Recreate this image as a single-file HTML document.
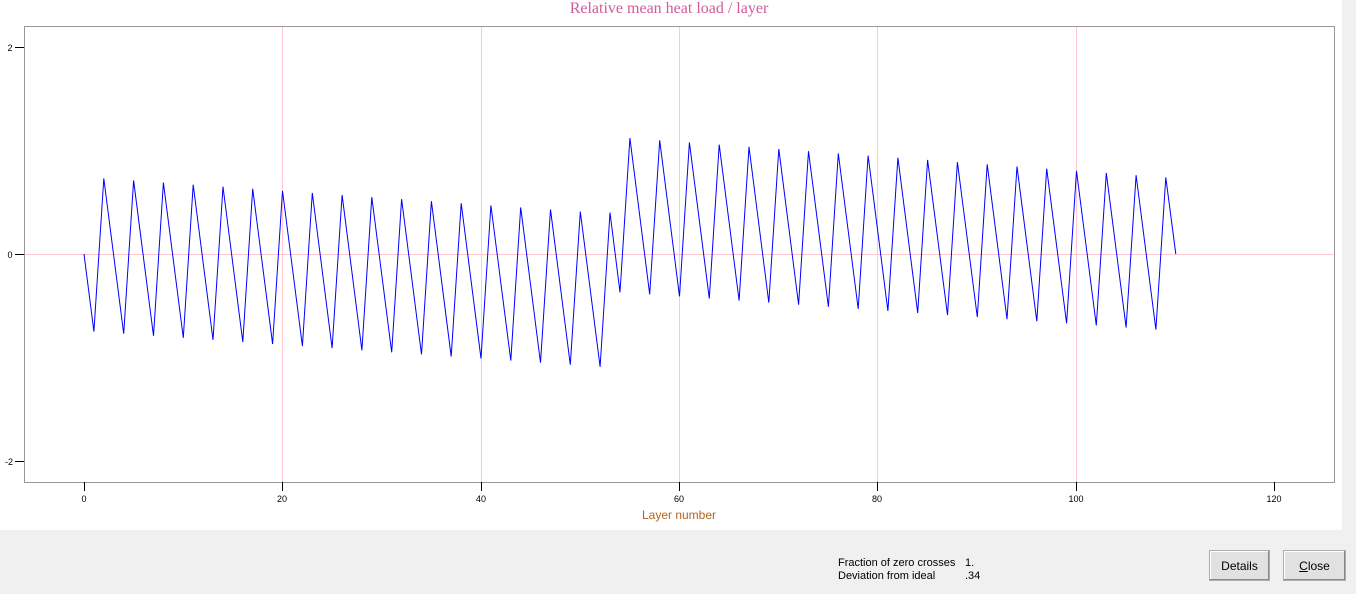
<!DOCTYPE html>
<html><head><meta charset="utf-8"><style>
html,body{margin:0;padding:0;width:1356px;height:594px;overflow:hidden;background:#f0f0f0;font-family:"Liberation Sans",sans-serif}
#w{position:absolute;left:0;top:0;width:1342px;height:530px;background:#fff}
.btn{position:absolute;top:550px;height:31px;width:61px;background:#e1e1e1;border:1px solid #adadad;box-shadow:inset -1px -1px 0 #888,inset 1px 1px 0 #fff;font-size:12px;line-height:31px;text-align:center;color:#000;box-sizing:border-box}
.t{position:absolute;font-size:11px;color:#000}
</style></head><body>
<div id="w"></div>
<svg width="1356" height="594" style="position:absolute;left:0;top:0">
<text x="669" y="13" text-anchor="middle" font-family="Liberation Serif" font-size="16" fill="#d35a9a">Relative mean heat load / layer</text>
<g stroke="#ffc8d0" stroke-width="1">
<line x1="282.5" y1="27" x2="282.5" y2="482"/><line x1="481.5" y1="27" x2="481.5" y2="482"/><line x1="679.5" y1="27" x2="679.5" y2="482"/><line x1="877.5" y1="27" x2="877.5" y2="482"/><line x1="1076.5" y1="27" x2="1076.5" y2="482"/>
<line x1="24" y1="254.5" x2="1334" y2="254.5"/>
</g>
<rect x="24.5" y="26.5" width="1310" height="456" fill="none" stroke="#999"/>
<g stroke="#000">
<line x1="15" y1="47.5" x2="24" y2="47.5"/><line x1="15" y1="254.5" x2="24" y2="254.5"/><line x1="15" y1="461.5" x2="24" y2="461.5"/>
<line x1="84.5" y1="482" x2="84.5" y2="491"/><line x1="282.5" y1="482" x2="282.5" y2="491"/><line x1="481.5" y1="482" x2="481.5" y2="491"/><line x1="679.5" y1="482" x2="679.5" y2="491"/><line x1="877.5" y1="482" x2="877.5" y2="491"/><line x1="1076.5" y1="482" x2="1076.5" y2="491"/><line x1="1274.5" y1="482" x2="1274.5" y2="491"/>
</g>
<g font-size="9" fill="#000" text-anchor="middle">
<text x="10" y="51">2</text><text x="10" y="258">0</text><text x="9" y="465">-2</text>
<text x="84" y="502">0</text><text x="282" y="502">20</text><text x="481" y="502">40</text><text x="679" y="502">60</text><text x="877" y="502">80</text><text x="1076" y="502">100</text><text x="1274" y="502">120</text>
</g>
<text x="679" y="519" text-anchor="middle" font-size="12" fill="#b5651d">Layer number</text>
<polyline id="pl" fill="none" stroke="#0000ff" stroke-width="1" points=""/>
</svg>
<div class="t" style="left:838px;top:557px">Fraction of zero crosses</div>
<div class="t" style="left:965px;top:557px">1.</div>
<div class="t" style="left:838px;top:570px">Deviation from ideal</div>
<div class="t" style="left:965px;top:570px">.34</div>
<div class="btn" style="left:1209px">Details</div>
<div class="btn" style="left:1283px;width:63px"><u>C</u>lose</div>
<script>
var v={};v[0]=0;v[110]=0;
for(var k=0;k<=16;k++){v[2+3*k]=0.73-(0.73-0.41)*k/16;}
v[53]=0.40;
for(var k=0;k<=17;k++){v[1+3*k]=-0.75-(1.09-0.75)*k/17;}
for(var k=0;k<=18;k++){v[55+3*k]=1.12-(1.12-0.74)*k/18;v[54+3*k]=-0.37-(0.73-0.37)*k/18;}
var keys=Object.keys(v).map(Number).sort(function(a,b){return a-b});
var pts=[];
for(var i=0;i<keys.length;i++){var L=keys[i];pts.push((84+L*9.925).toFixed(1)+","+(254-v[L]*103.5).toFixed(1));}
document.getElementById("pl").setAttribute("points",pts.join(" "));
</script>
</body></html>
